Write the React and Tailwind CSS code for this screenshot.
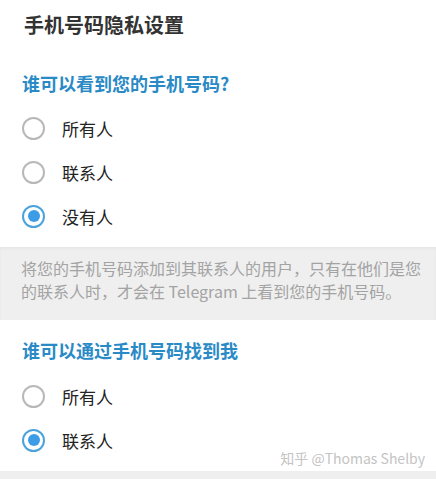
import { useState } from "react";

const font = { fontFamily: '"Noto Sans CJK SC", "Noto Sans", sans-serif' };

function Radio({ label, checked, onClick }) {
  return (
    <div className="h-[44px] flex items-center pl-[22px] cursor-pointer" onClick={onClick}>
      <div
        className={`w-[23px] h-[23px] rounded-full border-2 flex items-center justify-center ${
          checked ? "border-[#4ba3dd]" : "border-[#b8b8b8]"
        }`}
      >
        {checked && <div className="w-[12px] h-[12px] rounded-full bg-[#3d9ce6]" />}
      </div>
      <span className="ml-[17px] text-[17px] text-[#222] leading-none">{label}</span>
    </div>
  );
}

export default function App() {
  const [see, setSee] = useState("nobody");
  const [find, setFind] = useState("contacts");

  return (
    <div className="w-[436px] h-[479px] bg-white flex flex-col overflow-hidden relative" style={font}>
      <div className="h-[50px] flex items-center pl-[24px] text-[20px] font-bold text-[#333]">
        手机号码隐私设置
      </div>

      <div className="mt-[21px] h-[24px] flex items-center pl-[22px] text-[18px] font-bold text-[#2a8ac6]">
        谁可以看到您的手机号码?
      </div>
      <div className="mt-[11px]">
        <Radio label="所有人" checked={see === "all"} onClick={() => setSee("all")} />
        <Radio label="联系人" checked={see === "contacts"} onClick={() => setSee("contacts")} />
        <Radio label="没有人" checked={see === "nobody"} onClick={() => setSee("nobody")} />
      </div>

      <div className="mt-[9px] h-[73px] bg-[#efefef] shadow-[inset_0_2px_3px_rgba(0,0,0,0.04)] pl-[21px] pr-[12px] pt-[10px] text-[16px] leading-[23px] text-[#a3a3a3]">
        将您的手机号码添加到其联系人的用户，只有在他们是您的联系人时，才会在 Telegram 上看到您的手机号码。
      </div>

      <div className="mt-[18px] h-[24px] flex items-center pl-[22px] text-[18px] font-bold text-[#2a8ac6]">
        谁可以通过手机号码找到我
      </div>
      <div className="mt-[12px]">
        <Radio label="所有人" checked={find === "all"} onClick={() => setFind("all")} />
        <Radio label="联系人" checked={find === "contacts"} onClick={() => setFind("contacts")} />
      </div>

      <div className="mt-[9px] flex-1 bg-[#efefef]" />

      <div className="absolute right-[11px] top-[448px] text-[14px] text-[#c4c4c4] leading-[20px]">
        知乎 @Thomas Shelby
      </div>
    </div>
  );
}
